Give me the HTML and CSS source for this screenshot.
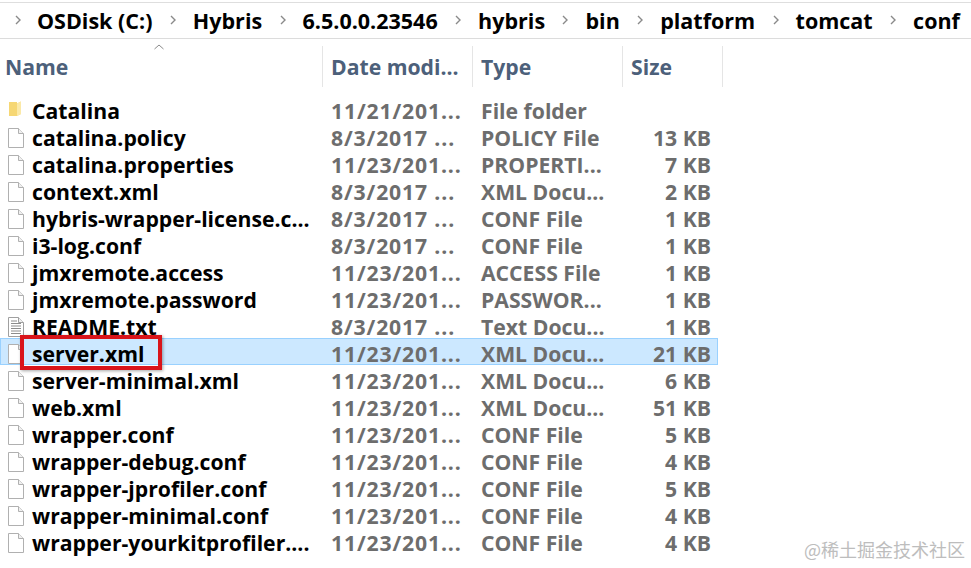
FILE: index.html
```html
<!DOCTYPE html>
<html lang="en">
<head>
<meta charset="utf-8">
<title>conf</title>
<link rel="stylesheet" href="styles.css">
</head>
<body>
<svg class="defs" width="0" height="0" aria-hidden="true">
  <symbol id="chev" viewBox="0 0 8 12"><path d="M2 2l4 4-4 4" fill="none" stroke="#8a8a8a" stroke-width="1.4"/></symbol>
  <symbol id="file" viewBox="0 0 16 20"><path d="M.5.5h10l5 5v14H.5z" fill="#fff" stroke="#b0b0b0"/><path d="M10.500.5v5h5" fill="#f0f0f0" stroke="#b0b0b0"/></symbol>
  <symbol id="text" viewBox="0 0 16 20"><path d="M.5.5h10l5 5v14H.5z" fill="#fff" stroke="#a0a0a0"/><path d="M10.500.5v5h5" fill="#f0f0f0" stroke="#a0a0a0"/><path d="M3 4h6M3 6.500h10M3 9h10M3 11.500h10M3 14h10M3 16.500h10" stroke="#8c8c8c"/></symbol>
  <symbol id="folder" viewBox="0 0 12 16"><path d="M0 1h8v1.500l4-2V13l-4 2H0z" fill="#f6d774"/><path d="M8 2.500l4-2V13l-4 2z" fill="#fbe9a8"/></symbol>
</svg>
<div class="window">
  <nav class="crumbs">
    <svg class="chev"><use href="#chev"/></svg><span>OSDisk (C:)</span>
    <svg class="chev"><use href="#chev"/></svg><span>Hybris</span>
    <svg class="chev"><use href="#chev"/></svg><span>6.5.0.0.23546</span>
    <svg class="chev"><use href="#chev"/></svg><span>hybris</span>
    <svg class="chev"><use href="#chev"/></svg><span>bin</span>
    <svg class="chev"><use href="#chev"/></svg><span>platform</span>
    <svg class="chev"><use href="#chev"/></svg><span>tomcat</span>
    <svg class="chev"><use href="#chev"/></svg><span>conf</span>
  </nav>
  <div class="head">
    <div class="hcell hname">Name<svg class="caret" viewBox="0 0 10 6"><path d="M.5 5L5 1l4.500 4" fill="none" stroke="#8a8a8a"/></svg></div>
    <div class="hcell">Date modi...</div>
    <div class="hcell">Type</div>
    <div class="hcell hsize">Size</div>
  </div>
  <div class="rows">
    <div class="row"><svg class="icon folder"><use href="#folder"/></svg><span class="name">Catalina</span><span class="meta date">11/21/201...</span><span class="meta">File folder</span><span class="meta size"></span></div>
    <div class="row"><svg class="icon"><use href="#file"/></svg><span class="name">catalina.policy</span><span class="meta date">8/3/2017 ...</span><span class="meta">POLICY File</span><span class="meta size">13 KB</span></div>
    <div class="row"><svg class="icon"><use href="#file"/></svg><span class="name">catalina.properties</span><span class="meta date">11/23/201...</span><span class="meta">PROPERTI...</span><span class="meta size">7 KB</span></div>
    <div class="row"><svg class="icon"><use href="#file"/></svg><span class="name">context.xml</span><span class="meta date">8/3/2017 ...</span><span class="meta">XML Docu...</span><span class="meta size">2 KB</span></div>
    <div class="row"><svg class="icon"><use href="#file"/></svg><span class="name">hybris-wrapper-license.c...</span><span class="meta date">8/3/2017 ...</span><span class="meta">CONF File</span><span class="meta size">1 KB</span></div>
    <div class="row"><svg class="icon"><use href="#file"/></svg><span class="name">i3-log.conf</span><span class="meta date">8/3/2017 ...</span><span class="meta">CONF File</span><span class="meta size">1 KB</span></div>
    <div class="row"><svg class="icon"><use href="#file"/></svg><span class="name">jmxremote.access</span><span class="meta date">11/23/201...</span><span class="meta">ACCESS File</span><span class="meta size">1 KB</span></div>
    <div class="row"><svg class="icon"><use href="#file"/></svg><span class="name">jmxremote.password</span><span class="meta date">11/23/201...</span><span class="meta">PASSWOR...</span><span class="meta size">1 KB</span></div>
    <div class="row"><svg class="icon"><use href="#text"/></svg><span class="name">README.txt</span><span class="meta date">8/3/2017 ...</span><span class="meta">Text Docu...</span><span class="meta size">1 KB</span></div>
    <div class="row selected"><svg class="icon"><use href="#file"/></svg><span class="name">server.xml</span><span class="meta date">11/23/201...</span><span class="meta">XML Docu...</span><span class="meta size">21 KB</span><i class="mark"></i></div>
    <div class="row"><svg class="icon"><use href="#file"/></svg><span class="name">server-minimal.xml</span><span class="meta date">11/23/201...</span><span class="meta">XML Docu...</span><span class="meta size">6 KB</span></div>
    <div class="row"><svg class="icon"><use href="#file"/></svg><span class="name">web.xml</span><span class="meta date">11/23/201...</span><span class="meta">XML Docu...</span><span class="meta size">51 KB</span></div>
    <div class="row"><svg class="icon"><use href="#file"/></svg><span class="name">wrapper.conf</span><span class="meta date">11/23/201...</span><span class="meta">CONF File</span><span class="meta size">5 KB</span></div>
    <div class="row"><svg class="icon"><use href="#file"/></svg><span class="name">wrapper-debug.conf</span><span class="meta date">11/23/201...</span><span class="meta">CONF File</span><span class="meta size">4 KB</span></div>
    <div class="row"><svg class="icon"><use href="#file"/></svg><span class="name">wrapper-jprofiler.conf</span><span class="meta date">11/23/201...</span><span class="meta">CONF File</span><span class="meta size">5 KB</span></div>
    <div class="row"><svg class="icon"><use href="#file"/></svg><span class="name">wrapper-minimal.conf</span><span class="meta date">11/23/201...</span><span class="meta">CONF File</span><span class="meta size">4 KB</span></div>
    <div class="row"><svg class="icon"><use href="#file"/></svg><span class="name">wrapper-yourkitprofiler....</span><span class="meta date">11/23/201...</span><span class="meta">CONF File</span><span class="meta size">4 KB</span></div>
  </div>
  <div class="watermark">@稀土掘金技术社区</div>
</div>
</body>
</html>
```
FILE: styles.css
```css
* { box-sizing: border-box; }
html, body { margin: 0; height: 100%; background: #fff; }
body { font-family: "Open Sans", "Noto Sans", sans-serif; overflow: hidden; }
.defs { display: block; height: 0; }
.window { position: relative; width: 971px; height: 568px; padding-top: 2px; overflow: hidden; }

.crumbs {
  display: flex; align-items: center;
  height: 37px;
  border-top: 1px solid #dedede;
  border-bottom: 1px solid #dcdcdc;
  padding: 0 0 1px 14px;
  font-size: 21.5px; font-weight: 700; color: #000;
  white-space: nowrap;
}
.chev { width: 8px; height: 12px; flex: none; margin-right: 16px; margin-left: 16.4px; }
.chev:first-child { margin-left: 0; margin-right: 15px; }

.head {
  display: grid;
  grid-template-columns: 323px 150px 150px 100px;
  height: 43px; margin-top: 5px; padding-top: 2px;
  font-size: 21.2px; font-weight: 700; color: #4c607a;
}
.hcell { position: relative; display: flex; align-items: center; padding-left: 8px; border-right: 1px solid #e5e5e5; }
.hname { padding-left: 5px; }
.caret { position: absolute; left: 154px; top: -2px; width: 10px; height: 6px; }

.rows { margin-top: 8px; }
.row {
  position: relative;
  display: grid;
  grid-template-columns: 32px 299px 150px 140px 90px;
  align-items: center;
  width: 718px; height: 27px; padding-top: 4px;
  font-size: 21.2px; line-height: 23px; white-space: nowrap;
}
.icon { width: 16px; height: 20px; margin-left: 8px; }
.folder { width: 12px; height: 16px; margin-left: 9px; margin-top: -3px; }
.name { font-weight: 700; color: #000; }
.meta { font-weight: 700; color: #6d6d6d; }
.date { letter-spacing: .85px; }
.size { text-align: right; }
.selected { background: #cce8ff; box-shadow: inset 0 0 0 1px #99d1ff; }
.mark {
  position: absolute; left: 20px; top: -3px;
  width: 142px; height: 35px;
  border: 4px solid #d9141a;
  box-shadow: 1px 1px 3px rgba(0, 0, 0, .35);
}
.watermark {
  position: absolute; right: 6px; bottom: 6px;
  font-family: "Noto Sans CJK SC", "Noto Sans", sans-serif;
  font-size: 18px; color: #bdbdbd;
}
```
